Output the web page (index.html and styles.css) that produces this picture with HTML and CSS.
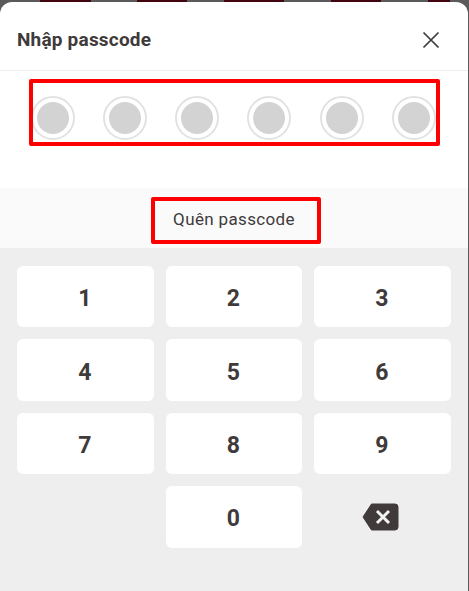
FILE: index.html
```html
<!DOCTYPE html>
<html lang="vi">
<head>
<meta charset="utf-8">
<title>Nhập passcode</title>
<link rel="stylesheet" href="styles.css">
</head>
<body>
<main class="sheet">
  <header class="sheet-header">
    <h1 class="sheet-title">Nhập passcode</h1>
    <button class="close" type="button" aria-label="Đóng">
      <svg width="18" height="18" viewBox="0 0 18 18" aria-hidden="true"><path d="M1.5 1.5 16.5 16.5M16.5 1.5 1.5 16.5" fill="none" stroke="#403a3a" stroke-width="1.7"/></svg>
    </button>
  </header>
  <section class="entry">
    <div class="dots">
      <span class="dot"></span><span class="dot"></span><span class="dot"></span><span class="dot"></span><span class="dot"></span><span class="dot"></span>
    </div>
    <div class="mark mark-dots"></div>
  </section>
  <div class="forgot">
    <a class="forgot-link">Quên passcode</a>
    <div class="mark mark-forgot"></div>
  </div>
  <section class="keypad">
    <button class="key" type="button">1</button>
    <button class="key" type="button">2</button>
    <button class="key" type="button">3</button>
    <button class="key" type="button">4</button>
    <button class="key" type="button">5</button>
    <button class="key" type="button">6</button>
    <button class="key" type="button">7</button>
    <button class="key" type="button">8</button>
    <button class="key" type="button">9</button>
    <span class="key-empty"></span>
    <button class="key" type="button">0</button>
    <button class="key-delete" type="button" aria-label="Xóa">
      <svg width="37" height="28" viewBox="0 0 37 28" aria-hidden="true">
        <path d="M9.5 1H33a3 3 0 0 1 3 3v20a3 3 0 0 1-3 3H9.5L1 14Z" fill="#403a3a" stroke="#403a3a" stroke-linejoin="round"/>
        <path d="M15 8 27 20M27 8 15 20" fill="none" stroke="#f3f3f3" stroke-width="3"/>
      </svg>
    </button>
  </section>
</main>
</body>
</html>
```
FILE: styles.css
```css
* { box-sizing: border-box; }
html, body { margin: 0; height: 100%; }
body {
  overflow: hidden;
  padding: 2px 1px 0 0;
  font-family: Roboto, "Liberation Sans", sans-serif;
  color: #403a3a;
  background-color: #5a5a5a;
  background-image: linear-gradient(90deg,
    transparent 40px, #420510 40px, #420510 91px, transparent 91px,
    transparent 137px, #420510 137px, #420510 187px, transparent 187px,
    transparent 224px, #420510 224px, #420510 284px, transparent 284px,
    transparent 331px, #420510 331px, #420510 381px, transparent 381px,
    transparent 428px, #420510 428px, #420510 450px, transparent 450px);
  background-size: 100% 4px;
  background-repeat: no-repeat;
}
.sheet {
  display: flex;
  flex-direction: column;
  height: 589px;
  background: #fff;
  border-radius: 12px 12px 0 0;
  overflow: hidden;
}
.sheet-header {
  display: flex;
  flex: none;
  align-items: center;
  justify-content: space-between;
  height: 69px;
  padding: 7px 28px 0 17px;
  border-bottom: 1px solid #eee;
}
.sheet-title {
  margin: 0;
  font-size: 19px;
  font-weight: 700;
  line-height: 24px;
  letter-spacing: 0.2px;
}
.close {
  display: flex;
  padding: 0;
  border: 0;
  background: none;
}
.entry {
  position: relative;
  flex: none;
  height: 117px;
  padding: 25px 0 0 30.7px;
}
.dots {
  display: flex;
  gap: 28.27px;
}
.dot {
  display: flex;
  flex: none;
  align-items: center;
  justify-content: center;
  width: 44px;
  height: 44px;
  border: 2px solid #e2e2e2;
  border-radius: 50%;
}
.dot::before {
  content: "";
  width: 32px;
  height: 32px;
  border-radius: 50%;
  background: #d3d3d3;
}
.mark {
  position: absolute;
  border: 4px solid #f00;
  border-radius: 2px;
}
.mark-dots {
  left: 29px;
  top: 8px;
  width: 411px;
  height: 67px;
}
.forgot {
  position: relative;
  display: flex;
  flex: none;
  align-items: center;
  justify-content: center;
  height: 60px;
  padding-top: 2px;
  background: #fafafa;
  font-size: 17px;
  letter-spacing: 0.35px;
}
.mark-forgot {
  left: 151px;
  top: 9px;
  width: 170px;
  height: 47px;
}
.keypad {
  display: grid;
  flex: 1;
  grid-template-columns: repeat(3, 136.5px);
  grid-auto-rows: 61.4px;
  gap: 12px;
  align-content: start;
  padding: 18px 0 0 17px;
  background: #eee;
}
.key {
  padding: 4px 1px 0 0;
  border: 0;
  border-radius: 6px;
  background: #fff;
  color: inherit;
  font-family: inherit;
  font-size: 23px;
  font-weight: 700;
}
.key-delete {
  display: flex;
  align-items: center;
  justify-content: center;
  padding: 0 4px 0 0;
  border: 0;
  background: none;
}
```
